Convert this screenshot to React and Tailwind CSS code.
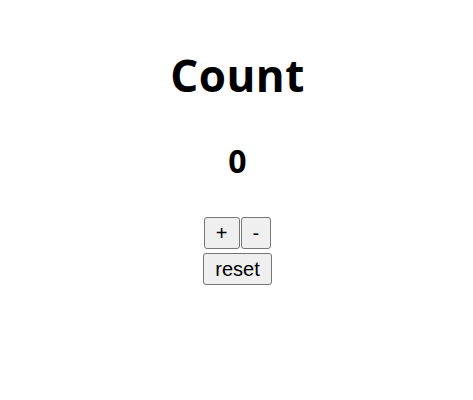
import { useState } from "react";

const App = () => {
  const [count, setCount] = useState(0);

  const btn =
    "bg-[#efefef] border border-[#767676] rounded-[3px] px-[11px] py-[3px] text-[20px] leading-[24px] text-black font-['Liberation_Sans',Arial,sans-serif]";

  return (
    <div className="min-h-screen bg-white flex flex-col items-center pl-[2px] font-['Open_Sans','Noto_Sans',sans-serif] text-black">
      {/* Title */}
      <h1 className="mt-[49px] text-[44px] leading-[52px] font-bold tracking-[0.5px]">Count</h1>
      <h2 className="mt-[40px] text-[32px] leading-[40px] font-bold">{count}</h2>

      {/* Controls */}
      <div className="mt-[36px] flex flex-col items-center gap-[4px]">
        <div className="flex gap-[1px]">
          <button className={btn} onClick={() => setCount(count + 1)}>
            +
          </button>
          <button className={btn} onClick={() => setCount(count - 1)}>
            -
          </button>
        </div>
        <button className={btn} onClick={() => setCount(0)}>
          reset
        </button>
      </div>
    </div>
  );
};

export default App;
